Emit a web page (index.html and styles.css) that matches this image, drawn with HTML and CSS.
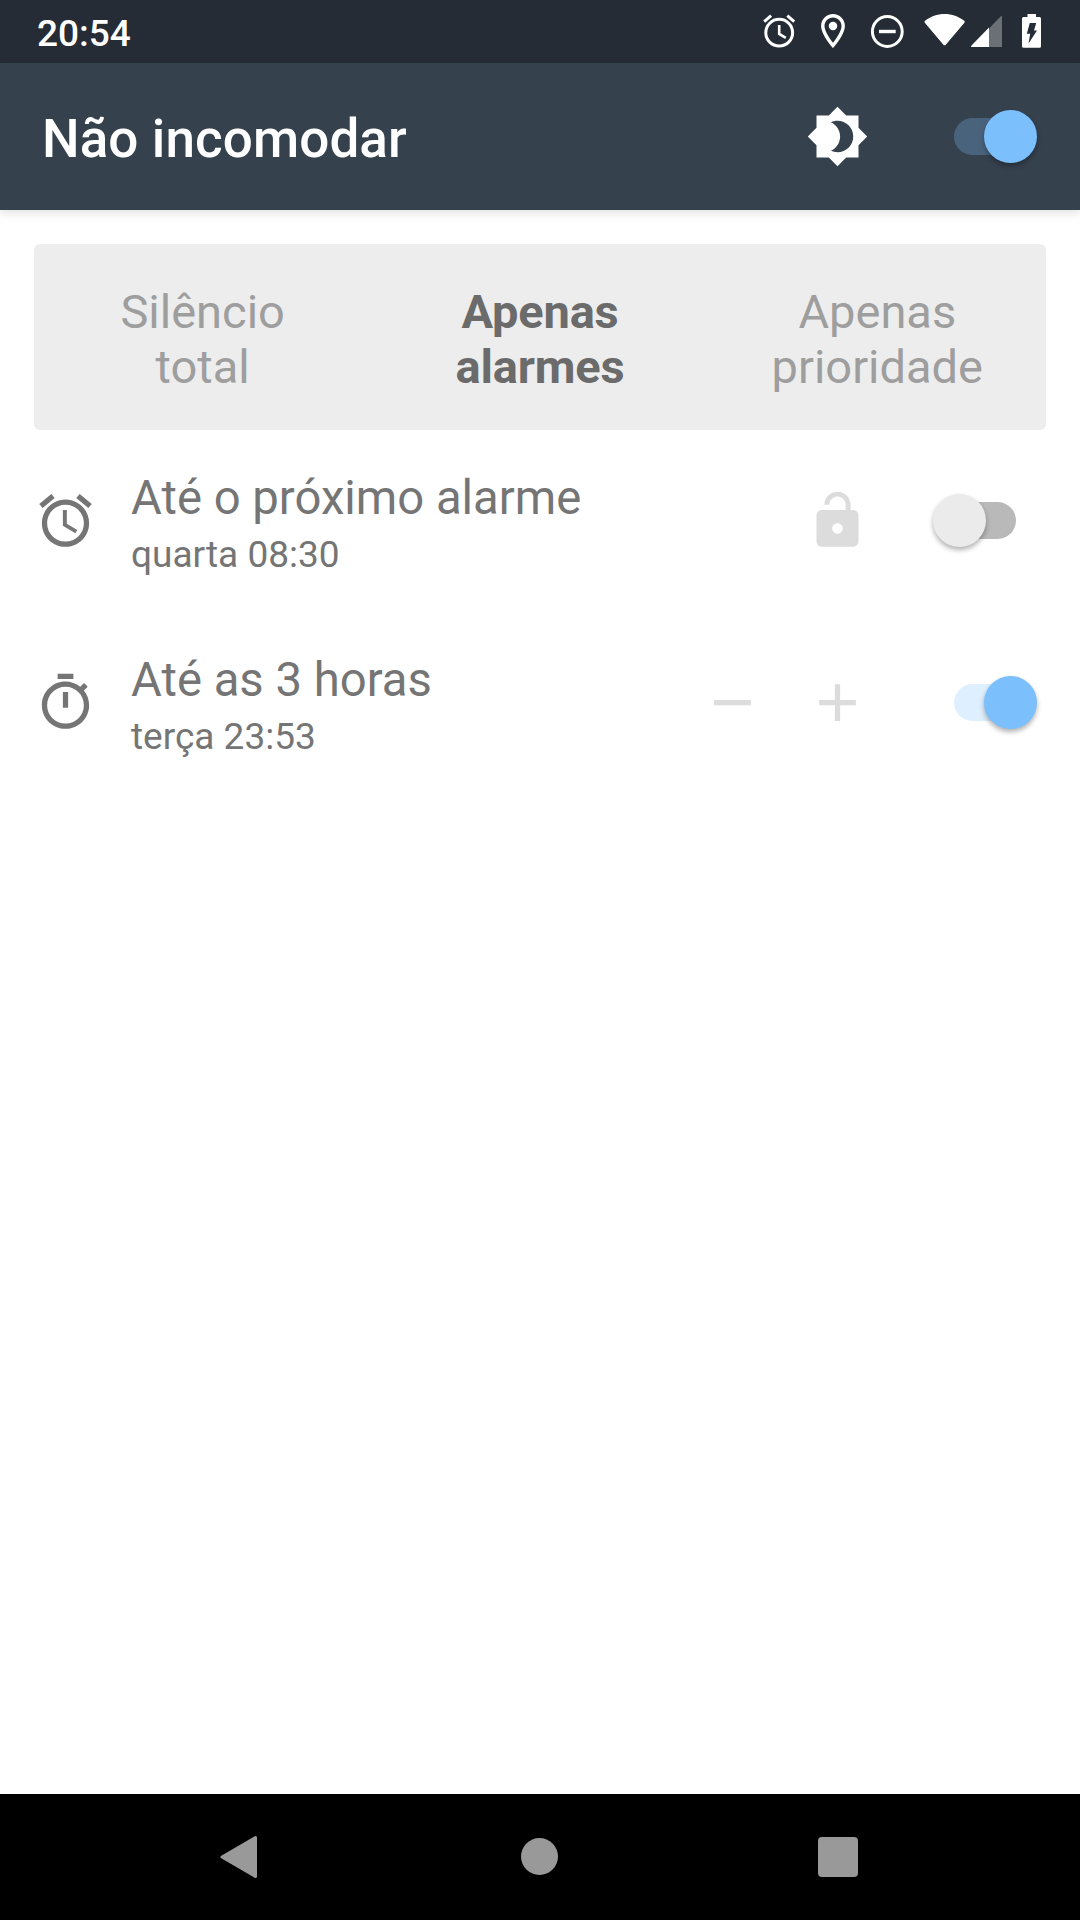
FILE: index.html
```html
<!DOCTYPE html>
<html lang="pt-BR">
<head>
    <meta charset="UTF-8">
    <meta name="viewport" content="width=device-width, initial-scale=1.0">
    <title>Não incomodar</title>
    <link rel="stylesheet" href="styles.css">
</head>
<body>
    <div class="status-bar">
        <span class="clock">20:54</span>
        <div class="status-icons">
            <svg class="st-alarm" width="33" height="35" viewBox="0 0 33 35" fill="none" stroke="#fff">
                <circle cx="16.2" cy="18.7" r="13.4" stroke-width="3"/>
                <path d="M16.2 11v9l6.6 3.8" stroke-width="2.6"/>
                <path d="M1.2 7.7l6.9-6M31.2 7.7l-6.9-6" stroke-width="3"/>
            </svg>
            <svg class="st-pin" width="24" height="34" viewBox="5 2 14 20" fill="#fff">
                <path d="M12 2C8.13 2 5 5.13 5 9c0 5.25 7 13 7 13s7-7.75 7-13c0-3.87-3.13-7-7-7zM7 9c0-2.76 2.24-5 5-5s5 2.24 5 5c0 2.88-2.88 7.19-5 9.88C9.92 16.21 7 11.85 7 9z"/>
                <circle cx="12" cy="9" r="2.5"/>
            </svg>
            <svg class="st-dnd" width="34" height="35" viewBox="0 0 34 35" fill="none" stroke="#fff">
                <circle cx="17.3" cy="17.5" r="14.9" stroke-width="3"/>
                <path d="M9 17.5h16.7" stroke-width="3.4"/>
            </svg>
            <svg class="st-wifi" width="42" height="35" viewBox="0 0 42 35" fill="#fff">
                <path d="M1 6.8C6.500 2.400 13.200 0 20.600 0s14.100 2.400 19.600 6.800q1 .8.200 1.900L22 30.500q-1.400 1.700-2.800 0L.8 8.700Q0 7.600 1 6.800z"/>
            </svg>
            <svg class="st-signal" width="31" height="35" viewBox="0 0 31 35" fill="#fff">
                <path d="M18 14.500L29.600 2.500q1.400-1 1.400.6V33H18z" fill="#6b7076"/>
                <path d="M18 13.500V33H1Q-.6 33 .5 31.500z"/>
            </svg>
            <svg class="st-battery" width="19" height="35" viewBox="0 0 19 35">
                <path d="M5.500 0h8.500v3h3.500q1.500 0 1.500 1.500v27.800q0 1.500-1.500 1.500h-16q-1.500 0-1.500-1.500V4.500Q0 3 1.500 3h4z" fill="#fff"/>
                <path d="M7.800 9h6.400l-2.200 7.600h3L6.500 29.500l1.700-9.800H4.800z" fill="#252c35"/>
            </svg>
        </div>
    </div>

    <header class="app-bar">
        <h1>Não incomodar</h1>
        <svg class="icon icon-white" viewBox="0 0 24 24">
            <path d="M20 8.690V4h-4.690L12 .69 8.690 4H4v4.690L.69 12 4 15.310V20h4.690L12 23.310 15.310 20H20v-4.690L23.310 12 20 8.690zM12 18c-.89 0-1.740-.2-2.500-.55C11.560 16.500 13 14.420 13 12s-1.440-4.500-3.500-5.450C10.260 6.200 11.110 6 12 6c3.310 0 6 2.690 6 6s-2.690 6-6 6z"/>
        </svg>
        <div class="switch on dark"><span class="thumb"></span></div>
    </header>

    <main>
        <div class="modes">
            <div class="mode">Silêncio<br>total</div>
            <div class="mode active">Apenas<br>alarmes</div>
            <div class="mode">Apenas<br>prioridade</div>
        </div>

        <div class="rows">
            <div class="row">
                <svg class="icon icon-grey" viewBox="0 0 24 24">
                    <path d="M22 5.720l-4.600-3.860-1.290 1.530 4.600 3.860L22 5.720zM7.880 3.390L6.600 1.860 2 5.710l1.290 1.530 4.590-3.850zM12.500 8H11v6l4.750 2.850.75-1.230-4-2.370V8zM12 4c-4.970 0-9 4.030-9 9s4.020 9 9 9c4.970 0 9-4.030 9-9s-4.030-9-9-9zm0 16c-3.870 0-7-3.130-7-7s3.130-7 7-7 7 3.130 7 7-3.130 7-7 7z"/>
                </svg>
                <div class="label">
                    <div class="name">Até o próximo alarme</div>
                    <div class="time">quarta 08:30</div>
                </div>
                <svg class="icon icon-light" viewBox="0 0 24 24">
                    <path d="M12 17c1.100 0 2-.9 2-2s-.9-2-2-2-2 .9-2 2 .9 2 2 2zm6-9h-1V6c0-2.760-2.240-5-5-5S7 3.240 7 6h1.900c0-1.710 1.390-3.100 3.100-3.100 1.710 0 3.100 1.390 3.100 3.100v2H6c-1.100 0-2 .9-2 2v10c0 1.100.9 2 2 2h12c1.100 0 2-.9 2-2V10c0-1.100-.9-2-2-2z" fill-rule="evenodd"/>
                </svg>
                <div class="switch off"><span class="thumb"></span></div>
            </div>

            <div class="row">
                <svg class="icon icon-grey" viewBox="0 0 24 24">
                    <path d="M15 1H9v2h6V1zm-4 13h2V8h-2v6zm8.030-6.610l1.420-1.420c-.43-.51-.9-.99-1.410-1.410l-1.420 1.420C16.070 4.740 14.120 4 12 4c-4.970 0-9 4.030-9 9s4.020 9 9 9 9-4.030 9-9c0-2.120-.74-4.070-1.970-5.610zM12 20c-3.870 0-7-3.130-7-7s3.130-7 7-7 7 3.130 7 7-3.130 7-7 7z"/>
                </svg>
                <div class="label">
                    <div class="name">Até as 3 horas</div>
                    <div class="time">terça 23:53</div>
                </div>
                <svg class="icon icon-light minus" viewBox="0 0 24 24"><path d="M19 13H5v-2h14v2z"/></svg>
                <svg class="icon icon-light" viewBox="0 0 24 24"><path d="M19 13h-6v6h-2v-6H5v-2h6V5h2v6h6v2z"/></svg>
                <div class="switch on"><span class="thumb"></span></div>
            </div>
        </div>
    </main>

    <nav class="nav-bar">
        <svg class="nav-back" width="38" height="44" viewBox="0 0 38 44">
            <path d="M2 22L35.500 2.500v39z" fill="#999" stroke="#999" stroke-width="3" stroke-linejoin="round"/>
        </svg>
        <span class="nav-home"></span>
        <span class="nav-recent"></span>
    </nav>
</body>
</html>
```

FILE: styles.css
```css
* {
    box-sizing: border-box;
}

body {
    margin: 0;
    height: 1920px;
    display: flex;
    flex-direction: column;
    background-color: #fff;
    font-family: Roboto, sans-serif;
    color: #757575;
    overflow: hidden;
}

svg {
    display: block;
    flex: none;
}

/* status bar */
.status-bar {
    height: 63px;
    padding: 0 39px 0 37px;
    display: flex;
    justify-content: space-between;
    background-color: #252c35;
    color: #fff;
}

.clock {
    font-size: 37px;
    font-weight: 500;
    line-height: 67px;
}

.status-icons {
    display: flex;
    padding-top: 14px;
}

.st-pin {
    margin-left: 25px;
}

.st-dnd {
    margin-left: 25px;
}

.st-wifi {
    margin-left: 20px;
}

.st-signal {
    margin-left: 5px;
}

.st-battery {
    margin-left: 20px;
}

/* app bar */
.app-bar {
    height: 147px;
    padding: 0 43px 0 42px;
    display: flex;
    align-items: center;
    background-color: #36414e;
    box-shadow: 0 3px 9px rgba(0, 0, 0, 0.12);
}

.app-bar h1 {
    margin: 0;
    flex: 1;
    font-size: 53px;
    font-weight: 500;
    line-height: 62px;
    letter-spacing: 0.1px;
    color: #fff;
    padding-top: 4px;
}

.icon {
    width: 63px;
    height: 63px;
}

.icon-white {
    fill: #fff;
}

.icon-grey {
    fill: #757575;
}

.icon-light {
    fill: #dcdcdc;
}

/* switches */
.switch {
    flex: none;
    width: 83px;
    height: 37px;
    margin-left: 85px;
    display: flex;
    align-items: center;
    background: linear-gradient(#deefff, #deefff) no-repeat;
    background-size: 62px 37px;
    border-radius: 19px;
}

.switch.on {
    justify-content: flex-end;
}

.switch.off {
    margin-left: 64px;
    margin-right: 21px;
    background-image: linear-gradient(#b9b9b9, #b9b9b9);
    background-position: right;
}

.switch.dark {
    background-image: linear-gradient(#4a637d, #4a637d);
}

.thumb {
    flex: none;
    width: 53px;
    height: 53px;
    border-radius: 50%;
    background-color: #7bbffc;
    box-shadow: 0 3px 5px rgba(0, 0, 0, 0.3);
}

.off .thumb {
    background-color: #ebebeb;
}

/* content */
main {
    flex: 1;
    padding: 34px 34px 0;
}

.modes {
    height: 186px;
    display: grid;
    grid-template-columns: repeat(3, 1fr);
    align-items: center;
    background-color: #ededed;
    border-radius: 6px;
}

.mode {
    font-size: 47px;
    line-height: 55px;
    text-align: center;
    color: #9e9e9e;
    padding-top: 4px;
}

.mode.active {
    font-weight: bold;
    letter-spacing: -0.2px;
    color: #6b6b6b;
}

.rows {
    margin-top: -1px;
}

.row {
    height: 182px;
    display: flex;
    align-items: center;
    padding-right: 9px;
}

.label {
    flex: 1;
    padding: 10px 0 0 34px;
}

.name {
    font-size: 47.25px;
    line-height: 56px;
}

.time {
    font-size: 37px;
    line-height: 50px;
    padding-top: 4px;
}

.minus {
    margin-right: 42px;
}

/* navigation bar */
.nav-bar {
    height: 126px;
    padding: 0 222px 1px 220px;
    display: flex;
    align-items: center;
    justify-content: space-between;
    background-color: #000;
}

.nav-home {
    width: 37px;
    height: 37px;
    margin-left: 3px;
    border-radius: 50%;
    background-color: #999;
}

.nav-recent {
    width: 40px;
    height: 40px;
    border-radius: 4px;
    background-color: #999;
}
```
